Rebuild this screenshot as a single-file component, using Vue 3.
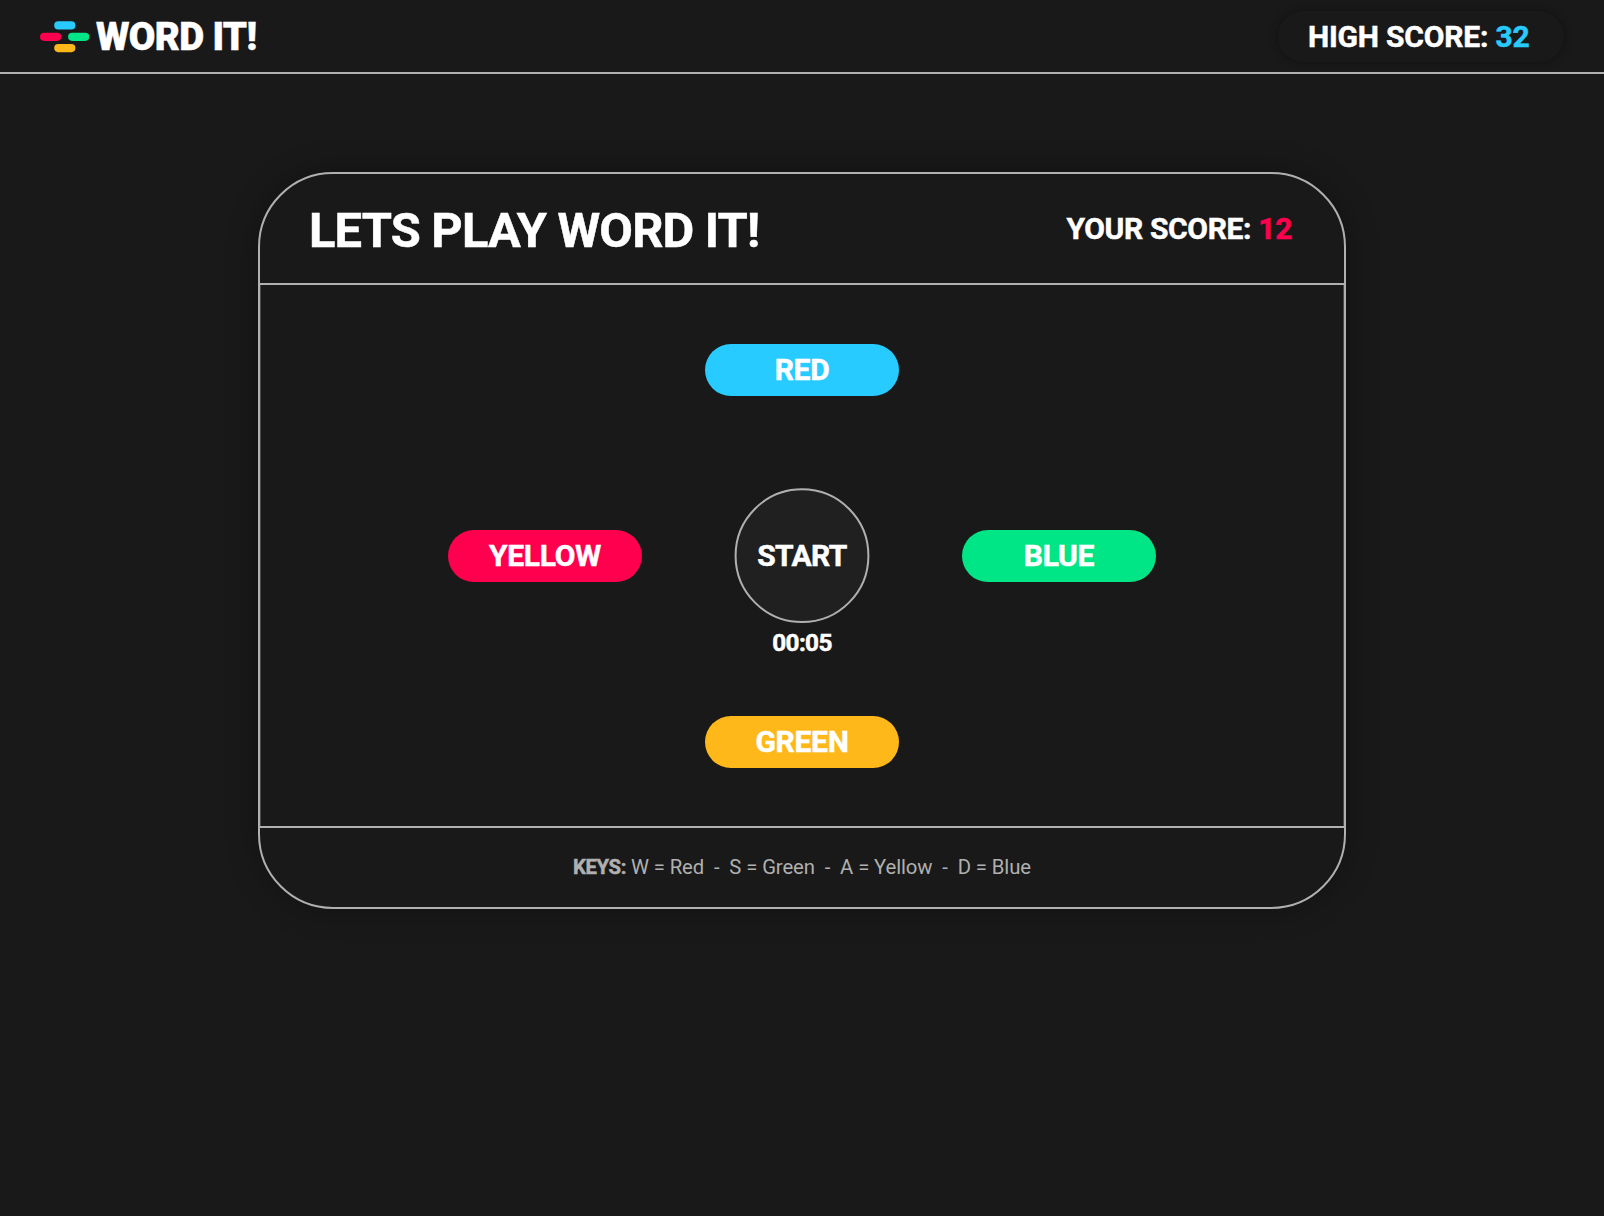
<script setup>
const highScore = 32
const score = 12
const time = '00:05'
const words = [
  { label: 'RED', place: 'top' },
  { label: 'YELLOW', place: 'left' },
  { label: 'BLUE', place: 'right' },
  { label: 'GREEN', place: 'bottom' },
]
</script>

<template>
  <div class="page">
    <header class="topbar">
      <div class="brand">
        <svg class="logo" width="50" height="32" viewBox="0 0 50 32">
          <rect x="14.2" y="0.3" width="21.2" height="8.2" rx="4.1" fill="#28cbff" />
          <rect x="0" y="11.7" width="21.2" height="8.2" rx="4.1" fill="#ff004f" />
          <rect x="28.1" y="11.7" width="21.2" height="8.2" rx="4.1" fill="#00e686" />
          <rect x="14.2" y="23" width="21.2" height="8.2" rx="4.1" fill="#ffb81a" />
        </svg>
        <span class="name">WORD IT!</span>
      </div>
      <div class="high">HIGH SCORE: <b>{{ highScore }}</b></div>
    </header>

    <main class="card">
      <div class="card-head">
        <h1>LETS PLAY WORD IT!</h1>
        <div class="score">YOUR SCORE: <b>{{ score }}</b></div>
      </div>
      <div class="board">
        <button v-for="w in words" :key="w.place" class="word" :class="w.place">{{ w.label }}</button>
        <div class="center">
          <button class="start">
            <svg width="136" height="136" viewBox="0 0 136 136">
              <circle cx="68" cy="67.7" r="66.4" fill="#202020" stroke="#b0b0b0" stroke-width="2" />
            </svg>
            <span>START</span>
          </button>
          <div class="timer">{{ time }}</div>
        </div>
      </div>
      <footer class="keys">
        <strong>KEYS:</strong>&nbsp;<span>W = Red&nbsp; -&nbsp; S = Green&nbsp; -&nbsp; A = Yellow&nbsp; -&nbsp; D = Blue</span>
      </footer>
    </main>
  </div>
</template>

<style>
body {
  background: #191919;
}
</style>

<style scoped>
.page {
  box-sizing: border-box;
  height: 1216px;
  overflow: hidden;
  background: #191919;
  color: #fff;
  font-family: Roboto, sans-serif;
}
.topbar {
  box-sizing: border-box;
  height: 74px;
  border-bottom: 2px solid #b0b0b0;
  padding: 0 40px;
  display: flex;
  align-items: center;
  justify-content: space-between;
}
.brand {
  display: flex;
  align-items: center;
}
.logo {
  display: block;
  margin-top: 1px;
}
.name {
  margin: 1px 0 0 6px;
  font-size: 38.5px;
  line-height: 44px;
  font-weight: 900;
  letter-spacing: -0.65px;
}
.name,
.high,
h1,
.score,
.word,
.start,
.timer,
.keys strong {
  -webkit-text-stroke: 0.5px currentColor;
}
.high {
  box-sizing: border-box;
  width: 286px;
  height: 51px;
  margin-top: 1px;
  border-radius: 26px;
  padding-left: 30px;
  font-size: 30px;
  line-height: 52px;
  font-weight: 700;
  letter-spacing: -0.2px;
  box-shadow: 0 0 9px rgba(0, 0, 0, 0.35);
}
b {
  font-weight: 700;
  -webkit-text-stroke: 0.5px currentColor;
}
.high b {
  color: #28cbff;
}
.card {
  box-sizing: border-box;
  width: 1088px;
  height: 737px;
  margin: 98px auto 0;
  border: 2px solid #b0b0b0;
  border-radius: 75px;
  display: flex;
  flex-direction: column;
  box-shadow: 0 0 32px rgba(0, 0, 0, 0.3);
}
.card-head {
  height: 109px;
  flex: none;
  padding: 0 52px 0 49px;
  display: flex;
  align-items: center;
  justify-content: space-between;
}
h1 {
  margin: 4px 0 0;
  font-size: 48.8px;
  line-height: 56px;
  font-weight: 700;
  letter-spacing: -0.82px;
}
.score {
  margin-top: 1px;
  font-size: 30px;
  line-height: 36px;
  font-weight: 700;
  letter-spacing: -0.35px;
}
.score b {
  color: #ff004f;
}
.board {
  box-sizing: border-box;
  height: 545px;
  flex: none;
  border: solid #b0b0b0;
  border-width: 2px 0;
  padding-top: 1px;
  display: grid;
  grid-template-columns: 194px 194px 194px;
  grid-template-rows: 52px 52px 52px;
  gap: 134px 63px;
  place-content: center;
  box-shadow: inset 1px 0 #4a4a4a, inset -1px 0 #4a4a4a;
}
.word {
  width: 194px;
  height: 52px;
  border: 0;
  padding: 0;
  border-radius: 26px;
  font: 700 30px/52px Roboto, sans-serif;
  letter-spacing: -0.3px;
  color: #fff;
}
.top { grid-area: 1 / 2; background: #28cbff; }
.left { grid-area: 2 / 1; background: #ff004f; }
.right { grid-area: 2 / 3; background: #00e686; }
.bottom { grid-area: 3 / 2; background: #ffb81a; }
.center {
  grid-area: 2 / 2;
  height: 52px;
  margin-top: -42px;
  display: flex;
  flex-direction: column;
  align-items: center;
}
.start {
  flex: none;
  width: 136px;
  height: 136px;
  border: 0;
  padding: 0;
  background: none;
  display: grid;
  place-items: center;
  color: #fff;
  font: 700 30px/52px Roboto, sans-serif;
  letter-spacing: -0.6px;
}
.start > * {
  grid-area: 1 / 1;
}
.timer {
  margin-top: 5px;
  font-size: 24.3px;
  line-height: 28px;
  font-weight: 700;
  letter-spacing: -0.65px;
}
.keys {
  flex: 1;
  padding-bottom: 1px;
  display: flex;
  align-items: center;
  justify-content: center;
  color: #b0b0b0;
  font-size: 20.3px;
  line-height: 24px;
  letter-spacing: -0.1px;
}
.keys strong {
  letter-spacing: -0.4px;
}
</style>
